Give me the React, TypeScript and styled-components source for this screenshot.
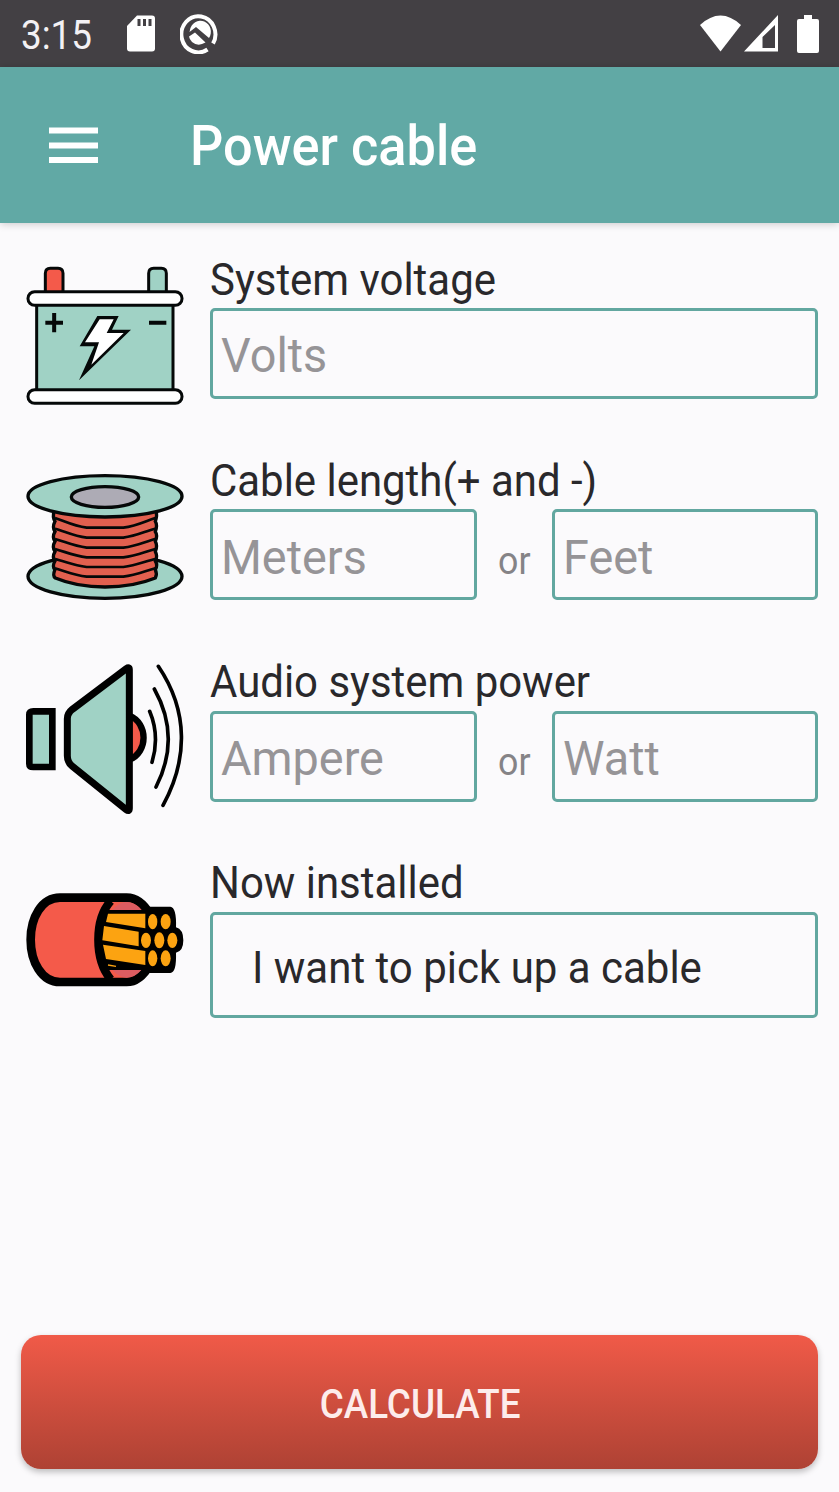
import React from "react";
import styled, { createGlobalStyle } from "styled-components";

const GlobalStyle = createGlobalStyle`
  * { box-sizing: border-box; }
  body { margin: 0; background: #fbfafc; font-family: Roboto, "Liberation Sans", sans-serif; }
  svg { display: block; flex: none; }
`;

const Screen = styled.div`
  width: 839px;
  height: 1492px;
  display: flex;
  flex-direction: column;
  background: #fbfafc;
  overflow: hidden;
`;

const StatusBar = styled.div`
  height: 67px;
  flex: none;
  display: flex;
  align-items: center;
  justify-content: space-between;
  background: #434044;
  padding: 0 20px 0 21px;
`;

const StatusGroup = styled.div<{ $gap: number }>`
  display: flex;
  align-items: center;
  gap: ${(p) => p.$gap}px;
`;

const Clock = styled.div`
  width: 73px;
  padding-top: 5px;
`;

const AppBar = styled.header`
  height: 156px;
  flex: none;
  display: flex;
  align-items: center;
  gap: 92px;
  padding: 0 48px;
  background: #61a9a5;
  box-shadow: 0 1px 8px rgba(0, 0, 0, 0.2);
`;

const Title = styled.h1`
  margin: 0;
  padding-top: 4px;
  font-size: inherit;
`;

const MenuButton = styled.button`
  border: 0;
  padding: 0;
  width: 50px;
  height: 37px;
  background: none;
`;

const Text = styled.span<{ $size: number; $squeeze?: number; $weight?: number; $color: string; $origin?: string }>`
  display: block;
  white-space: nowrap;
  font-size: ${(p) => p.$size}px;
  line-height: 1.172;
  font-weight: ${(p) => p.$weight ?? 400};
  color: ${(p) => p.$color};
  transform: scaleX(${(p) => p.$squeeze ?? 1});
  transform-origin: ${(p) => p.$origin ?? "left"} center;
`;

const Form = styled.main`
  flex: 1;
  display: flex;
  flex-direction: column;
  padding: 12.5px 21px 0 10px;
`;

const FormRow = styled.section`
  height: 201.33px;
  flex: none;
  display: flex;
  align-items: center;
  gap: 10px;
`;

const FieldColumn = styled.div`
  align-self: flex-start;
  flex: 1;
  display: flex;
  flex-direction: column;
  padding-top: 19px;
`;

const Label = styled.div`
  height: 53.5px;
  display: flex;
  align-items: flex-start;
`;

const Inputs = styled.div`
  display: flex;
  align-items: center;
`;

const Field = styled.div<{ $tall?: boolean }>`
  flex: 1;
  height: ${(p) => (p.$tall ? 106 : 91)}px;
  display: flex;
  align-items: center;
  border: 3px solid #62a7a0;
  border-radius: 5px;
  padding: ${(p) => (p.$tall ? "7px 0 0 39px" : "5px 0 0 8px")};
  overflow: hidden;
`;

const Or = styled.div`
  width: 75px;
  display: flex;
  justify-content: center;
  padding-top: 12px;
`;

const Footer = styled.footer`
  padding: 0 21px 23px;
`;

const CalculateButton = styled.button`
  width: 100%;
  height: 134px;
  display: flex;
  align-items: center;
  justify-content: center;
  border: 0;
  border-radius: 20px;
  padding: 6px 0 0 2px;
  font-family: inherit;
  background: linear-gradient(#f05a48, #ae4234);
  box-shadow: 0 3px 6px rgba(0, 0, 0, 0.25);
`;

const MINT = "#a0d2c5";
const RED = "#f45a4a";
const INK = "#050808";

const SdCardIcon = () => (
  <svg width="28" height="37" viewBox="0 0 28 37">
    <path d="M10 .5H25Q28 .5 28 3.5V33.500Q28 36.500 25 36.500H3Q0 36.500 0 33.500V11Z" fill="#fff" />
    <path d="M12 4V11M17.500 4V11M23 4V11" stroke="#434044" strokeWidth="3" />
  </svg>
);

const AndroidQIcon = () => (
  <svg width="38" height="41" viewBox="0 0 38 41" fill="none">
    <path d="M27.500 36.500A17 18 0 1 1 33 30.500" stroke="#fff" strokeWidth="4" />
    <path d="M10 17A10.500 11 0 1 1 29 25L16 14L9.500 19Z" fill="#fff" />
    <path d="M9 23.500L15 19.500L25.500 29.500Q18 34 12 29Q9.500 26.500 9 23.500Z" fill="#fff" />
    <path d="M25 26L34 36" stroke="#434044" strokeWidth="3" />
  </svg>
);

const WifiIcon = () => (
  <svg width="41" height="37" viewBox="0 0 41 37">
    <path d="M0 10Q20.500-9 41 10L20.500 36.500Z" fill="#fff" />
  </svg>
);

const SignalIcon = () => (
  <svg width="34" height="37" viewBox="0 0 34 37">
    <path d="M34 0V36.500H0ZM31 10L18.500 22V33H31Z" fill="#fff" fillRule="evenodd" />
  </svg>
);

const BatteryLevelIcon = () => (
  <svg width="22" height="38" viewBox="0 0 22 38">
    <path d="M7 0H15V4H20Q22 4 22 6V36Q22 38 20 38H2Q0 38 0 36V6Q0 4 2 4H7Z" fill="#fff" />
  </svg>
);

const CarBatteryIcon = () => (
  <svg width="190" height="170" viewBox="0 3 570 510" stroke={INK} strokeWidth="9">
    <path d="M106 128V70Q106 55 121 55H144Q159 55 159 70V128Z" fill={RED} />
    <path d="M416 128V70Q416 55 431 55H454Q469 55 469 70V128Z" fill={MINT} />
    <rect x="80" y="160" width="409" height="264" fill={MINT} />
    <rect x="54" y="125" width="462" height="41" rx="20" fill="#fff" />
    <rect x="54" y="419" width="462" height="41" rx="20" fill="#fff" />
    <path d="M106 218H159M132.500 189V247M417 218H469" strokeWidth="12" fill="none" />
    <path d="M262 198H326L306 239H363L207 391L253 289H209Z" fill={INK} stroke="none" />
    <path d="M269 208H311L290 249H341L244 344L267 277H225Z" fill="#fff" stroke="none" />
  </svg>
);

const SpoolIcon = () => (
  <svg width="190" height="155" viewBox="0 0 570 465" stroke={INK} strokeWidth="10">
    <ellipse cx="285" cy="349" rx="231" ry="66" fill={MINT} />
    <path d="M133 145V352Q200 380 285 380T438 352V145Z" fill="#e2604f" stroke="none" />
    <path
      d="M133 150C128 166 129 175 135 184C128 198 129 207 135 215C128 227 129 236 135 244C128 256 129 266 135 275C128 287 129 296 135 303C128 315 129 323 135 329C130 340 130 350 136 354Q200 381 285 381T436 354C440 346 440 337 436 329C441 321 441 311 436 303C441 294 441 284 436 275C441 263 441 253 436 244C441 232 441 222 436 215C441 201 441 192 436 184C441 170 441 161 438 150"
      fill="none"
    />
    <path
      d="M135 174C165 184 190 198 230 203H340C380 198 405 184 436 174M135 206C165 214 190 228 230 233H340C380 228 405 214 436 206M135 237C165 245 190 258 230 263H340C380 258 405 245 436 237M135 267C165 275 190 287 230 292H340C380 287 405 275 436 267M135 297C165 304 190 316 230 321H340C380 316 405 304 436 297M135 325C165 333 190 345 230 350H340C380 345 405 333 436 325"
      fill="none"
      strokeWidth="8"
    />
    <ellipse cx="285" cy="109" rx="231" ry="62" fill={MINT} />
    <ellipse cx="285" cy="111" rx="101" ry="31" fill="#adabb5" />
  </svg>
);

const SpeakerIcon = () => (
  <svg width="190" height="175" viewBox="0 0 570 525" stroke="#000" strokeWidth="20">
    <path d="M127 181H70Q58 181 58 191V338Q58 348 70 348H127Z" fill={MINT} />
    <path d="M358 194C415 216 415 304 358 326Z" fill={RED} strokeWidth="19" />
    <path d="M358 56Q358 47 349 53L187 175Q172 187 172 203V314Q172 334 187 346L349 476Q358 483 358 472Z" fill={MINT} strokeWidth="21" />
    <path d="M419 181Q450 255 426 334M433 114C489 214 488 310 438 408M445 46C537 182 533 328 459 463" fill="none" strokeWidth="11" strokeLinecap="round" />
  </svg>
);

const CableIcon = () => (
  <svg width="190" height="120" viewBox="0 0 570 360" stroke="#000" strokeWidth="26">
    <path d="M150 53H350C382 53 405 77 421 105V252C405 280 382 306 350 306H150C95 306 62 245 62 179S95 53 150 53Z" fill={RED} />
    <path d="M350 66C334 66 318 76 308 90H394Q375 66 350 66ZM308 270H394Q375 293 350 293Q324 291 308 270Z" fill="#dd5c61" stroke="none" />
    <path d="M288 90H410L418 80H481Q500 82 498 142Q520 148 520 181T498 218Q500 277 481 279H418L410 270H288Q245 179 288 90Z" fill="#000" stroke="none" />
    <path d="M302 63Q265 105 265 179T302 298" fill="none" strokeWidth="25" />
    <path d="M294 101H406V145L288 126ZM282 138L386 155V199L277 181ZM279 194L406 213V255L288 237Z" fill="#fca311" stroke="none" />
    <g fill="#fca311" stroke="none">
      <ellipse cx="428" cy="125" rx="14" ry="23" />
      <ellipse cx="467" cy="125" rx="15" ry="23" />
      <ellipse cx="408" cy="181" rx="15" ry="23" />
      <ellipse cx="448" cy="181" rx="15" ry="24" />
      <ellipse cx="487" cy="181" rx="15" ry="23" />
      <ellipse cx="428" cy="235" rx="14" ry="24" />
      <ellipse cx="467" cy="235" rx="15" ry="24" />
    </g>
    <path d="M294 255L318 259" stroke="#fca311" strokeWidth="4" />
  </svg>
);

const Caption = ({ children }: { children: string }) => (
  <Label>
    <Text $size={44} $squeeze={0.953} $color="#29282b">{children}</Text>
  </Label>
);

const Hint = ({ children }: { children: string }) => (
  <Text $size={49} $squeeze={0.955} $color="#969497">{children}</Text>
);

const PairRow = ({ icon, label, first, second }: { icon: React.ReactNode; label: string; first: string; second: string }) => (
  <FormRow>
    {icon}
    <FieldColumn>
      <Caption>{label}</Caption>
      <Inputs>
        <Field><Hint>{first}</Hint></Field>
        <Or><Text $size={38} $squeeze={0.94} $origin="center" $color="#858386">or</Text></Or>
        <Field><Hint>{second}</Hint></Field>
      </Inputs>
    </FieldColumn>
  </FormRow>
);

export default function App() {
  return (
    <>
      <GlobalStyle />
      <Screen>
        <StatusBar>
          <StatusGroup $gap={25}>
            <StatusGroup $gap={33}>
              <Clock>
                <Text $size={40} $squeeze={0.92} $color="#f3f1f4">3:15</Text>
              </Clock>
              <SdCardIcon />
            </StatusGroup>
            <AndroidQIcon />
          </StatusGroup>
          <StatusGroup $gap={19}>
            <StatusGroup $gap={3}>
              <WifiIcon />
              <SignalIcon />
            </StatusGroup>
            <BatteryLevelIcon />
          </StatusGroup>
        </StatusBar>
        <AppBar>
          <MenuButton aria-label="Menu">
            <svg width="50" height="37" viewBox="0 0 50 37">
              <path d="M1 3.500H50M1 18.500H50M1 33H50" stroke="#fff" strokeWidth="6" />
            </svg>
          </MenuButton>
          <Title>
            <Text $size={56} $squeeze={0.934} $weight={500} $color="#fff">Power cable</Text>
          </Title>
        </AppBar>
        <Form>
          <FormRow>
            <CarBatteryIcon />
            <FieldColumn>
              <Caption>System voltage</Caption>
              <Inputs>
                <Field><Hint>Volts</Hint></Field>
              </Inputs>
            </FieldColumn>
          </FormRow>
          <PairRow icon={<SpoolIcon />} label="Cable length(+ and -)" first="Meters" second="Feet" />
          <PairRow icon={<SpeakerIcon />} label="Audio system power" first="Ampere" second="Watt" />
          <FormRow>
            <CableIcon />
            <FieldColumn>
              <Caption>Now installed</Caption>
              <Inputs>
                <Field $tall>
                  <Text $size={44} $squeeze={0.954} $color="#29282b">I want to pick up a cable</Text>
                </Field>
              </Inputs>
            </FieldColumn>
          </FormRow>
        </Form>
        <Footer>
          <CalculateButton>
            <Text $size={40} $squeeze={0.92} $weight={500} $origin="center" $color="#fdeceb">CALCULATE</Text>
          </CalculateButton>
        </Footer>
      </Screen>
    </>
  );
}
